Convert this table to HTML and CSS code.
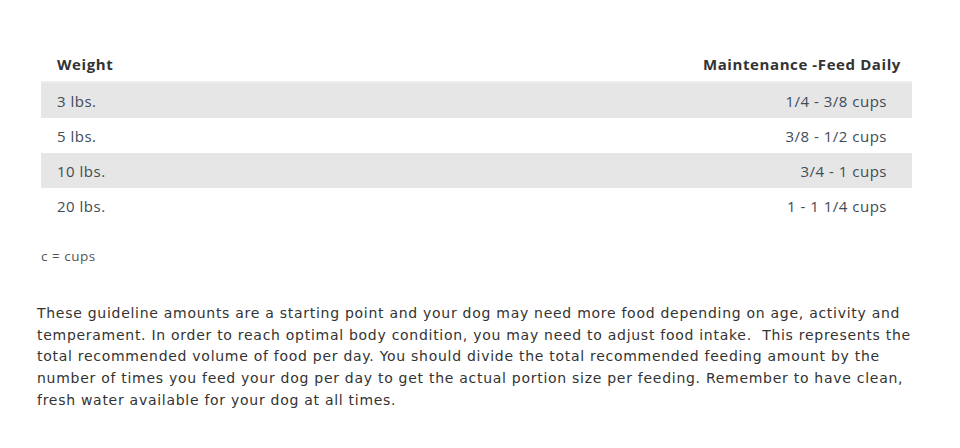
FILE: index.html
```html
<!DOCTYPE html>
<html>
<head>
<meta charset="utf-8">
<link rel="stylesheet" href="styles.css">
</head>
<body>
<div class="page">
  <table class="feed">
    <thead>
      <tr><th class="c-w">Weight</th><th class="c-m">Maintenance -Feed Daily</th></tr>
    </thead>
    <tbody>
      <tr class="alt"><td class="c-w">3 lbs.</td><td class="c-a">1/4 - 3/8 cups</td></tr>
      <tr><td class="c-w">5 lbs.</td><td class="c-a">3/8 - 1/2 cups</td></tr>
      <tr class="alt"><td class="c-w">10 lbs.</td><td class="c-a">3/4 - 1 cups</td></tr>
      <tr><td class="c-w">20 lbs.</td><td class="c-a">1 - 1 1/4 cups</td></tr>
    </tbody>
  </table>
  <p class="note">c = cups</p>
  <p class="desc">These guideline amounts are a starting point and your dog may need more food depending on age, activity and temperament. In order to reach optimal body condition, you may need to adjust food intake.&nbsp; This represents the total recommended volume of food per day. You should divide the total recommended feeding amount by the number of times you feed your dog per day to get the actual portion size per feeding. Remember to have clean, fresh water available for your dog at all times.</p>
</div>
</body>
</html>
```
FILE: styles.css
```css
html, body { margin: 0; padding: 0; background: #fff; }
.page { padding: 46px 0 0 41px; width: 880px; }
.feed {
  width: 871px;
  border-collapse: collapse;
  font-family: "Open Sans", "Liberation Sans", sans-serif;
}
.feed th {
  height: 35px;
  padding: 0;
  font-size: 15px;
  font-weight: 700;
  letter-spacing: 0.6px;
  color: #333;
  border-bottom: 2px solid #ededed;
}
.feed td {
  height: 35px;
  padding: 0;
  font-size: 15px;
  letter-spacing: 0.5px;
  color: #3e4c57;
}
.feed .c-w { text-align: left; padding-left: 16px; }
.feed .c-m { text-align: right; padding-right: 11px; }
.feed .c-a { text-align: right; padding-right: 25px; }
.feed tr.alt td { background: #e6e6e6; }
.note {
  margin: 24px 0 0 0;
  font-family: "Open Sans", "Liberation Sans", sans-serif;
  font-size: 13.5px;
  letter-spacing: 0.5px;
  color: #555;
}
.desc {
  margin: 38px 0 0 -4px;
  width: 880px;
  font-family: "DejaVu Sans", sans-serif;
  font-size: 14px;
  letter-spacing: 0.72px;
  line-height: 21.7px;
  color: #333;
}
```
